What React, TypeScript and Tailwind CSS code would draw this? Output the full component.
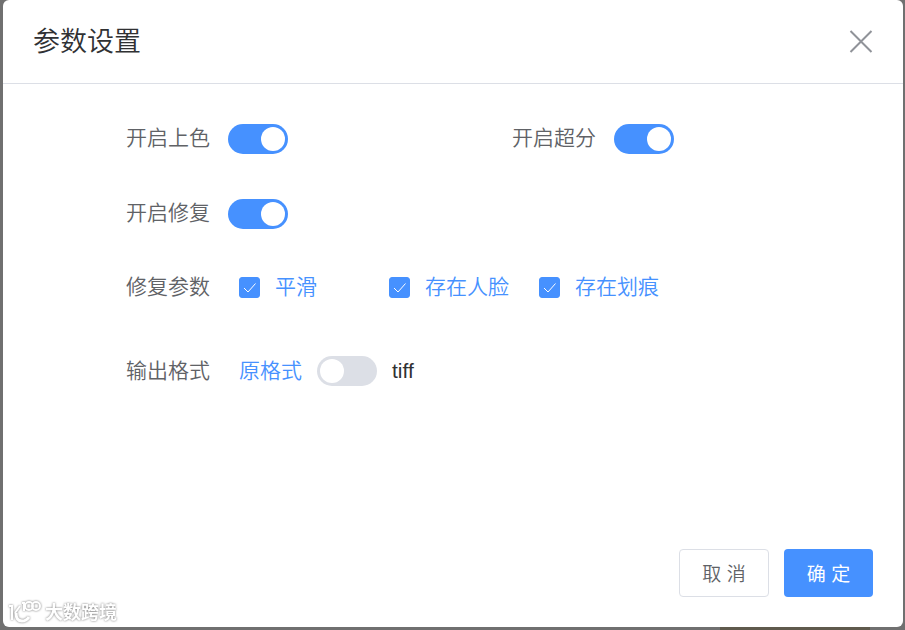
import { useState } from 'react';

const fixOptions = ['平滑', '存在人脸', '存在划痕'];

function Switch({ id, label, defaultChecked = false }: { id: string; label: string; defaultChecked?: boolean }) {
  return (
    <input
      id={id}
      type="checkbox"
      role="switch"
      aria-label={label}
      defaultChecked={defaultChecked}
      className="flex h-[30px] w-[60px] shrink-0 cursor-pointer appearance-none items-center rounded-full bg-[#dcdfe6] px-[3px] before:size-6 before:rounded-full before:bg-white checked:justify-end checked:bg-[#4691ff]"
    />
  );
}

function SwitchField({ id, label }: { id: string; label: string }) {
  return (
    <div className="flex items-center gap-[18px]">
      <label htmlFor={id} className="pb-0.5">{label}</label>
      <Switch id={id} label={label} defaultChecked />
    </div>
  );
}

function CheckField({ label }: { label: string }) {
  const [checked, setChecked] = useState(true);

  return (
    <label className="flex w-[150px] cursor-pointer items-center gap-[15px] text-[#4691ff]">
      <span className="grid size-[21px] shrink-0">
        <input
          type="checkbox"
          checked={checked}
          onChange={(e) => setChecked(e.target.checked)}
          className="col-start-1 row-start-1 size-[21px] appearance-none rounded-[3px] border border-[#dcdfe6] checked:border-[#4691ff] checked:bg-[#4691ff]"
        />
        {checked && (
          <svg viewBox="0 0 21 21" fill="none" stroke="white" className="pointer-events-none col-start-1 row-start-1 size-[21px]">
            <path d="M5 11l4 4 7.500-8.500" />
          </svg>
        )}
      </span>
      <span className="whitespace-nowrap">{label}</span>
    </label>
  );
}

function Watermark() {
  return (
    <div className="pointer-events-none absolute bottom-1 left-2 flex items-center gap-1 text-white drop-shadow-[0_0_1px_#777]">
      <svg viewBox="0 0 33 26" fill="none" stroke="currentColor" className="h-[26px] w-[33px]">
        <path d="M1 6h3v14M12 6l-5 7" strokeWidth="2" />
        <path d="M8 13c0 5 2 8 6 8 3 0 5-1 7-4" strokeWidth="3" />
        <path d="M14 3h2v8" strokeWidth="2" />
        <ellipse cx="21" cy="6" rx="4" ry="4" strokeWidth="2" />
        <ellipse cx="28" cy="6" rx="4" ry="4" strokeWidth="2" />
      </svg>
      <span className="text-[18px] leading-6 font-bold">大数跨境</span>
    </div>
  );
}

export default function App() {
  return (
    <div className="relative flex min-h-screen flex-col bg-[#707070] pr-[2px] pb-[3px] pl-[3px] font-['Liberation_Sans','Noto_Sans_CJK_SC',sans-serif] text-[21px] leading-[30px] font-[350] text-[#606266]">
      {/* edge of the page content under the dimmed backdrop */}
      <div className="absolute right-[35px] bottom-0 h-[3px] w-[150px] bg-[#5f5a4d]" />
      <div role="dialog" aria-labelledby="dialog-title" className="flex flex-1 flex-col rounded-md bg-white">
        <header className="flex h-[84px] items-center justify-between border-b border-[#dcdfe6] px-[30px]">
          <h2 id="dialog-title" className="text-[27px] leading-9 text-[#303133]">参数设置</h2>
          <button type="button" aria-label="关闭" className="text-[#909399]">
            <svg viewBox="0 0 24 24" fill="none" stroke="currentColor" strokeWidth="2" className="size-6">
              <path d="M1.500 1l21 21M22.500 1l-21 21" />
            </svg>
          </button>
        </header>

        <div className="flex-1 px-[123px] pt-[39px]">
          <div className="flex">
            <div className="w-[386px]">
              <SwitchField id="colorize" label="开启上色" />
            </div>
            <SwitchField id="upscale" label="开启超分" />
          </div>
          <div className="mt-[43px]">
            <SwitchField id="repair" label="开启修复" />
          </div>
          <div role="group" aria-labelledby="repair-options" className="mt-[42px] flex items-center">
            <span id="repair-options" className="w-[113px]">修复参数</span>
            {fixOptions.map((option) => (
              <CheckField key={option} label={option} />
            ))}
          </div>
          <div className="mt-[54px] flex items-center">
            <span className="w-[113px]">输出格式</span>
            <label htmlFor="format" className="flex items-center gap-[15px]">
              <span className="text-[#4691ff]">原格式</span>
              <Switch id="format" label="输出格式" />
              <span className="font-normal text-[#303133]">tiff</span>
            </label>
          </div>
        </div>

        <footer className="flex justify-end gap-[15px] p-[30px] text-[19px]">
          <button type="button" className="h-12 w-[90px] rounded border border-[#dcdfe6] pt-[3px]">取 消</button>
          <button type="button" className="h-12 w-[89px] rounded bg-[#4691ff] pt-[3px] font-normal text-white">确 定</button>
        </footer>
      </div>
      <Watermark />
    </div>
  );
}
